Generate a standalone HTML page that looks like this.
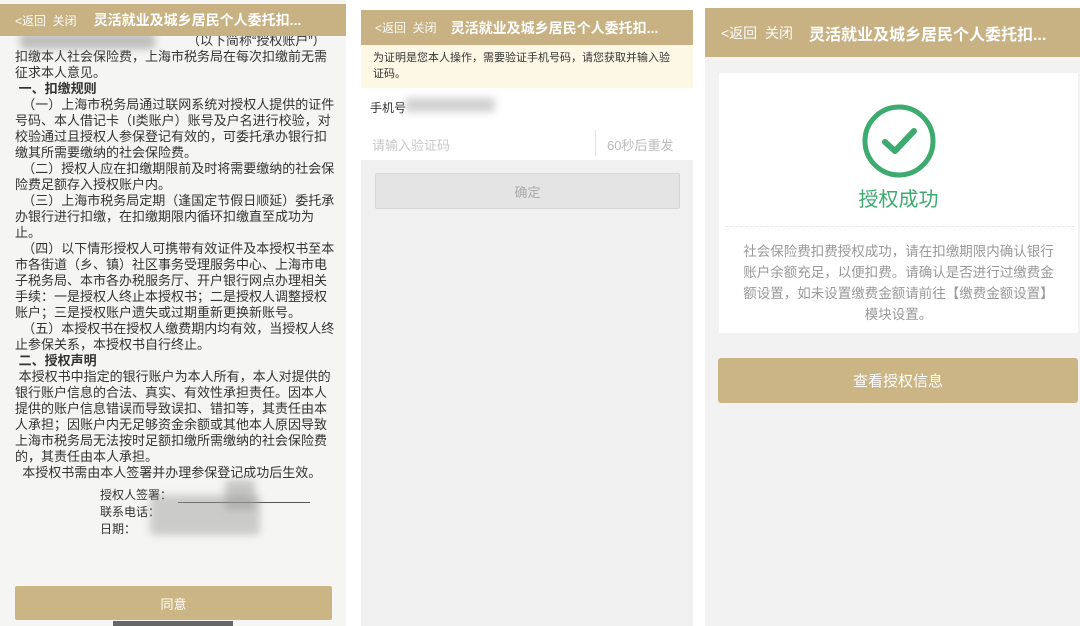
<!DOCTYPE html>
<html><head><meta charset="utf-8"><style>
*{margin:0;padding:0;box-sizing:border-box}
body{width:1080px;height:626px;background:#fff;position:relative;overflow:hidden;font-family:"Liberation Sans","Noto Sans CJK SC",sans-serif}
.abs{position:absolute}
.hdr{background:#c8b283;color:#fff;display:flex;align-items:center;white-space:nowrap;overflow:hidden}
.hdr .b{font-size:12px;opacity:.95}
.hdr .t{font-weight:bold}
#p1{left:0;top:0;width:346px;height:626px;background:#f5f5f4}
#p1 .txt{position:absolute;left:15px;top:33px;width:320px;font-size:13px;line-height:16px;color:#333}
#p1 .txt p{white-space:nowrap}
.bold{font-weight:bold}
.blur{position:absolute;background:#999;filter:blur(4px);opacity:.6;border-radius:4px}
</style></head><body>

<div id="p1" class="abs">
  <div class="txt">
    <p><span style="display:inline-block;width:172px"></span>（以下简称“授权账户”）</p>
    <p>扣缴本人社会保险费，上海市税务局在每次扣缴前无需</p>
    <p>征求本人意见。</p>
    <p class="bold">&nbsp;一、扣缴规则</p>
    <p>&nbsp;&nbsp;（一）上海市税务局通过联网系统对授权人提供的证件</p>
    <p>号码、本人借记卡（I类账户）账号及户名进行校验，对</p>
    <p>校验通过且授权人参保登记有效的，可委托承办银行扣</p>
    <p>缴其所需要缴纳的社会保险费。</p>
    <p>&nbsp;&nbsp;（二）授权人应在扣缴期限前及时将需要缴纳的社会保</p>
    <p>险费足额存入授权账户内。</p>
    <p>&nbsp;&nbsp;（三）上海市税务局定期（逢国定节假日顺延）委托承</p>
    <p>办银行进行扣缴，在扣缴期限内循环扣缴直至成功为</p>
    <p>止。</p>
    <p>&nbsp;&nbsp;（四）以下情形授权人可携带有效证件及本授权书至本</p>
    <p>市各街道（乡、镇）社区事务受理服务中心、上海市电</p>
    <p>子税务局、本市各办税服务厅、开户银行网点办理相关</p>
    <p>手续：一是授权人终止本授权书；二是授权人调整授权</p>
    <p>账户；三是授权账户遗失或过期重新更换新账号。</p>
    <p>&nbsp;&nbsp;（五）本授权书在授权人缴费期内均有效，当授权人终</p>
    <p>止参保关系，本授权书自行终止。</p>
    <p class="bold">&nbsp;二、授权声明</p>
    <p>&nbsp;本授权书中指定的银行账户为本人所有，本人对提供的</p>
    <p>银行账户信息的合法、真实、有效性承担责任。因本人</p>
    <p>提供的账户信息错误而导致误扣、错扣等，其责任由本</p>
    <p>人承担；因账户内无足够资金余额或其他本人原因导致</p>
    <p>上海市税务局无法按时足额扣缴所需缴纳的社会保险费</p>
    <p>的，其责任由本人承担。</p>
    <p>&nbsp;&nbsp;本授权书需由本人签署并办理参保登记成功后生效。</p>
  </div>
  <div class="blur" style="left:20px;top:33px;width:135px;height:16px"></div>
  <div class="abs" style="left:100px;top:487px;font-size:12px;line-height:17px;color:#333">授权人签署：<br>联系电话：<br>日期：</div>
  <div class="abs" style="left:178px;top:502px;width:132px;height:1px;background:#555"></div>
  <div class="blur" style="left:150px;top:495px;width:110px;height:40px;opacity:.45"></div>
  <div class="blur" style="left:225px;top:480px;width:30px;height:30px;opacity:.5"></div>
  <div class="abs" style="left:15px;top:586px;width:317px;height:34px;background:#ccb584;color:#fff;font-size:13px;display:flex;align-items:center;justify-content:center;border-radius:2px">同意</div>
  <div class="abs" style="left:113px;top:621px;width:120px;height:5px;background:#666"></div>
</div>
<div class="hdr abs" style="left:0;top:4px;width:346px;height:32px;padding-left:15px">
  <span class="b">&lt;返回&nbsp;&nbsp;关闭</span><span class="t" style="font-size:14px;margin-left:17px">灵活就业及城乡居民个人委托扣...</span>
</div>

<!-- Panel 2 -->
<div class="abs" style="left:361px;top:10px;width:332px;height:616px;background:#f0f0f0"></div>
<div class="hdr abs" style="left:361px;top:10px;width:332px;height:35px;padding-left:14px">
  <span class="b">&lt;返回&nbsp;&nbsp;关闭</span><span class="t" style="font-size:14px;margin-left:14px">灵活就业及城乡居民个人委托扣...</span>
</div>
<div class="abs" style="left:361px;top:45px;width:332px;height:43px;background:#fdf8e5;padding:5px 12px;font-size:11px;line-height:16px;color:#333">为证明是您本人操作，需要验证手机号码，请您获取并输入验<br>证码。</div>
<div class="abs" style="left:361px;top:88px;width:332px;height:72px;background:#fff"></div>
<div class="abs" style="left:370px;top:99px;font-size:12px;color:#333">手机号</div>
<div class="blur" style="left:405px;top:98px;width:90px;height:14px;opacity:.45"></div>
<div class="abs" style="left:372px;top:135px;font-size:13px;color:#c8c8c8">请输入验证码</div>
<div class="abs" style="left:595px;top:130px;width:1px;height:26px;background:#e5e5e5"></div>
<div class="abs" style="left:607px;top:135px;font-size:13px;color:#bbb">60秒后重发</div>
<div class="abs" style="left:375px;top:173px;width:305px;height:36px;background:#e4e4e4;border:1px solid #d6d6d6;border-radius:2px;color:#aaa;font-size:13px;display:flex;align-items:center;justify-content:center">确定</div>

<!-- Panel 3 -->
<div class="abs" style="left:705px;top:8px;width:375px;height:618px;background:#f2f2f2"></div>
<div class="hdr abs" style="left:705px;top:8px;width:375px;height:49px;padding-left:16px">
  <span class="b" style="font-size:14px">&lt;返回&nbsp;&nbsp;关闭</span><span class="t" style="font-size:16px;margin-left:16px">灵活就业及城乡居民个人委托扣...</span>
</div>
<div class="abs" style="left:719px;top:73px;width:359px;height:260px;background:#fff"></div>
<div class="abs" style="left:725px;top:226px;width:350px;border-top:1px dashed #e8e8e8"></div>
<svg class="abs" style="left:859px;top:101px" width="80" height="80" viewBox="0 0 80 80">
  <circle cx="40" cy="40" r="34" fill="none" stroke="#3daa6f" stroke-width="5"/>
  <path d="M26 41 L36 50 L55 30" fill="none" stroke="#3daa6f" stroke-width="6" stroke-linecap="round" stroke-linejoin="round"/>
</svg>
<div class="abs" style="left:719px;width:359px;top:183px;text-align:center;font-size:20px;color:#3daa6f">授权成功</div>
<div class="abs" style="left:719px;top:241px;width:359px;text-align:center;font-size:13.5px;line-height:21px;color:#999;white-space:nowrap">社会保险费扣费授权成功，请在扣缴期限内确认银行<br>账户余额充足，以便扣费。请确认是否进行过缴费金<br>额设置，如未设置缴费金额请前往【缴费金额设置】<br>模块设置。</div>
<div class="abs" style="left:718px;top:358px;width:360px;height:45px;background:#ccb584;border-radius:3px;color:#fff;font-size:15px;display:flex;align-items:center;justify-content:center">查看授权信息</div>
</body></html>
